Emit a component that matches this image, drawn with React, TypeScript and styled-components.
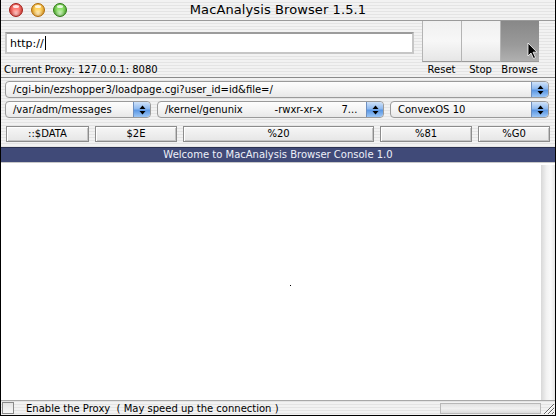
import React from 'react';
import styled, { createGlobalStyle } from 'styled-components';

const GlobalStyle = createGlobalStyle`
  html, body {
    margin: 0;
    padding: 0;
    background: #fff;
  }
  body {
    font-family: "DejaVu Sans", "Liberation Sans", sans-serif;
  }
`;

const pinstripe = `repeating-linear-gradient(
  to bottom,
  #f2f2f2 0px,
  #f2f2f2 2px,
  #e4e4e4 2px,
  #e4e4e4 3px
)`;

const Window = styled.div`
  width: 556px;
  height: 416px;
  box-sizing: border-box;
  border-left: 1px solid #000;
  border-right: 1px solid #000;
  border-bottom: 1px solid #000;
  display: flex;
  flex-direction: column;
  background: ${pinstripe};
  overflow: hidden;
  position: relative;
`;

const TitleBar = styled.div`
  height: 21px;
  flex: none;
  display: flex;
  align-items: center;
  position: relative;
  border-bottom: 1px solid #9a9a9a;
  box-sizing: border-box;
`;

const Lights = styled.div`
  display: flex;
  gap: 8px;
  padding-left: 8px;
`;

const Light = styled.span<{ tone: string; edge: string }>`
  width: 14px;
  height: 14px;
  border-radius: 50%;
  box-sizing: border-box;
  border: 1px solid ${({ edge }) => edge};
  background: radial-gradient(circle at 50% 78%, #ffffff99 0%, transparent 45%),
    radial-gradient(circle at 50% 40%, ${({ tone }) => tone} 30%, ${({ edge }) => edge} 100%);
  position: relative;
  &::after {
    content: '';
    position: absolute;
    left: 3px;
    top: 1px;
    width: 6px;
    height: 3px;
    border-radius: 50%;
    background: #ffffffcc;
  }
`;

const Title = styled.div`
  position: absolute;
  left: 0;
  right: 0;
  text-align: center;
  font-size: 13px;
  color: #000;
  top: 2px;
  letter-spacing: 0.1px;
`;

const Toolbar = styled.div`
  height: 57px;
  flex: none;
  display: flex;
  border-bottom: 1px solid #8a8a8a;
  box-sizing: border-box;
  background: ${pinstripe};
`;

const AddressCol = styled.div`
  flex: 1;
  display: flex;
  flex-direction: column;
`;

const InputRow = styled.div`
  height: 41px;
  display: flex;
  align-items: center;
  padding-left: 4px;
  padding-top: 3px;
  box-sizing: border-box;
`;

const UrlInput = styled.div`
  width: 409px;
  height: 22px;
  box-sizing: border-box;
  background: #fff;
  border: 2px solid #c6c6c6;
  border-top-color: #9c9c9c;
  font-size: 11px;
  display: flex;
  align-items: center;
  padding-left: 3px;
  color: #000;
`;

const Caret = styled.span`
  display: inline-block;
  width: 1px;
  height: 14px;
  background: #000;
  margin-left: 1px;
`;

const ProxyLabel = styled.div`
  height: 15px;
  font-size: 10px;
  padding-left: 3px;
  line-height: 15px;
  color: #000;
`;

const ButtonGroup = styled.div`
  display: flex;
  margin-right: 16px;
`;

const ToolCol = styled.div`
  width: 39px;
  display: flex;
  flex-direction: column;
  align-items: stretch;
`;

const ToolFace = styled.div<{ pressed?: boolean }>`
  height: 41px;
  box-sizing: border-box;
  border-left: 1px solid #b4b4b4;
  border-bottom: 1px solid #9a9a9a;
  background: ${({ pressed }) =>
    pressed
      ? 'linear-gradient(to bottom, #888 0%, #9a9a9a 60%, #b0b0b0 100%)'
      : 'linear-gradient(to bottom, #f0f0f0 0%, #f7f7f7 50%, #e6e6e6 100%)'};
  position: relative;
`;

const ToolLabel = styled.div`
  height: 15px;
  line-height: 15px;
  font-size: 10px;
  text-align: center;
  color: #000;
`;

const Cursor = styled.svg`
  position: absolute;
  left: 26px;
  top: 21px;
`;

const PopupArea = styled.div`
  flex: none;
  display: flex;
  flex-direction: column;
  gap: 3px;
  padding: 3px 6px 5px 4px;
  box-sizing: border-box;
`;

const PopupRow = styled.div`
  display: flex;
  gap: 6px;
  height: 17px;
`;

const Popup = styled.div<{ w?: number }>`
  ${({ w }) => (w ? `width: ${w}px; flex: none;` : 'flex: 1;')}
  height: 17px;
  box-sizing: border-box;
  border: 1px solid #9a9a9a;
  border-radius: 4px;
  background: linear-gradient(to bottom, #fdfdfd 0%, #f4f4f4 50%, #e8e8e8 100%);
  display: flex;
  align-items: center;
  font-size: 10px;
  color: #000;
  overflow: hidden;
`;

const PopupText = styled.span`
  flex: 1;
  padding-left: 7px;
  white-space: pre;
`;

const Arrows = styled.span`
  width: 16px;
  height: 15px;
  flex: none;
  border-left: 1px solid #6d8fc0;
  border-radius: 0 3px 3px 0;
  background: linear-gradient(to bottom, #cfe2f9 0%, #8fbaf0 45%, #5b97e4 55%, #9cc6f5 100%);
  display: flex;
  align-items: center;
  justify-content: center;
`;

const ButtonRow = styled.div`
  display: flex;
  height: 16px;
  margin-top: 5px;
  margin-left: 1px;
  gap: 6px;
`;

const PushButton = styled.div<{ w: number }>`
  width: ${({ w }) => w}px;
  flex: none;
  height: 16px;
  box-sizing: border-box;
  border: 1px solid #8c8c8c;
  box-shadow: inset 1px 1px 0 #fff, inset -1px -1px 0 #c4c4c4;
  background: linear-gradient(to bottom, #f6f6f6, #e6e6e6);
  font-size: 10px;
  text-align: center;
  line-height: 14px;
  color: #000;
`;

const ConsoleBar = styled.div`
  height: 15px;
  flex: none;
  box-sizing: border-box;
  border-top: 1px solid #2a3050;
  background: #404a78;
  color: #eef0f8;
  font-size: 10px;
  line-height: 14px;
  text-align: center;
`;

const Console = styled.div`
  flex: 1;
  display: flex;
  background: #fff;
  border-top: 1px solid #c8c8c8;
`;

const ConsoleBody = styled.div`
  flex: 1;
  position: relative;
`;

const Dot = styled.span`
  position: absolute;
  left: 289px;
  top: 122px;
  width: 1px;
  height: 1px;
  background: #000;
`;

const ScrollTrack = styled.div`
  width: 14px;
  flex: none;
  margin-top: 2px;
  background: linear-gradient(to right, #d8d8d8, #f2f2f2 40%, #fafafa 70%, #e6e6e6);
`;

const StatusBar = styled.div`
  height: 15px;
  flex: none;
  display: flex;
  align-items: center;
  border-top: 1px solid #a8a8a8;
  box-sizing: border-box;
`;

const Check = styled.span`
  width: 12px;
  height: 12px;
  margin-left: 1px;
  box-sizing: border-box;
  border: 1px solid #8a8a8a;
  background: linear-gradient(to bottom, #e4e4e4, #f8f8f8);
`;

const StatusText = styled.span`
  font-size: 10px;
  padding-left: 12px;
  flex: 1;
  white-space: pre;
  color: #000;
`;

const HScroll = styled.div`
  width: 101px;
  height: 11px;
  box-sizing: border-box;
  border: 1px solid #b8b8b8;
  background: linear-gradient(to bottom, #e2e2e2, #f0f0f0 50%, #dcdcdc);
`;

const Grip = styled.svg`
  flex: none;
`;

const UpDown = () => (
  <svg width="7" height="10" viewBox="0 0 7 10">
    <path d="M3.5 0.5 L6.5 4 L0.5 4 Z" fill="#000" />
    <path d="M0.5 6 L6.5 6 L3.5 9.5 Z" fill="#000" />
  </svg>
);

export default function App() {
  return (
    <>
      <GlobalStyle />
      <Window>
        <TitleBar>
          <Lights>
            <Light tone="#ff7b73" edge="#a31d17" />
            <Light tone="#ffd25e" edge="#b06a06" />
            <Light tone="#8ee26a" edge="#2d7a14" />
          </Lights>
          <Title>MacAnalysis Browser 1.5.1</Title>
        </TitleBar>

        <Toolbar>
          <AddressCol>
            <InputRow>
              <UrlInput>
                http://<Caret />
              </UrlInput>
            </InputRow>
            <ProxyLabel>Current Proxy: 127.0.0.1: 8080</ProxyLabel>
          </AddressCol>
          <ButtonGroup>
            <ToolCol>
              <ToolFace />
              <ToolLabel>Reset</ToolLabel>
            </ToolCol>
            <ToolCol>
              <ToolFace />
              <ToolLabel>Stop</ToolLabel>
            </ToolCol>
            <ToolCol>
              <ToolFace pressed>
                <Cursor width="12" height="18" viewBox="0 0 12 18">
                  <path d="M1 1 L1 14 L4 11 L6.5 16.5 L8.5 15.5 L6 10.2 L10 10.2 Z" fill="#000" stroke="#fff" strokeWidth="0.8" />
                </Cursor>
              </ToolFace>
              <ToolLabel>Browse</ToolLabel>
            </ToolCol>
          </ButtonGroup>
        </Toolbar>

        <PopupArea>
          <PopupRow>
            <Popup>
              <PopupText>/cgi-bin/ezshopper3/loadpage.cgi?user_id=id&amp;file=/</PopupText>
              <Arrows><UpDown /></Arrows>
            </Popup>
          </PopupRow>
          <PopupRow>
            <Popup w={146}>
              <PopupText>/var/adm/messages</PopupText>
              <Arrows><UpDown /></Arrows>
            </Popup>
            <Popup w={227}>
              <PopupText>{'/kernel/genunix          -rwxr-xr-x      7...'}</PopupText>
              <Arrows><UpDown /></Arrows>
            </Popup>
            <Popup>
              <PopupText>ConvexOS 10</PopupText>
              <Arrows><UpDown /></Arrows>
            </Popup>
          </PopupRow>
          <ButtonRow>
            <PushButton w={83}>::$DATA</PushButton>
            <PushButton w={82}>$2E</PushButton>
            <PushButton w={191}>%20</PushButton>
            <PushButton w={92}>%81</PushButton>
            <PushButton w={72}>%G0</PushButton>
          </ButtonRow>
        </PopupArea>

        <ConsoleBar>Welcome to MacAnalysis Browser Console 1.0</ConsoleBar>

        <Console>
          <ConsoleBody>
            <Dot />
          </ConsoleBody>
          <ScrollTrack />
        </Console>

        <StatusBar>
          <Check />
          <StatusText>Enable the Proxy  ( May speed up the connection )</StatusText>
          <HScroll />
          <Grip width="14" height="14" viewBox="0 0 14 14">
            <path d="M13 3 L3 13 M13 7 L7 13 M13 11 L11 13" stroke="#666" strokeWidth="1" />
            <path d="M13 4 L4 13 M13 8 L8 13 M13 12 L12 13" stroke="#fff" strokeWidth="1" />
          </Grip>
        </StatusBar>
      </Window>
    </>
  );
}
